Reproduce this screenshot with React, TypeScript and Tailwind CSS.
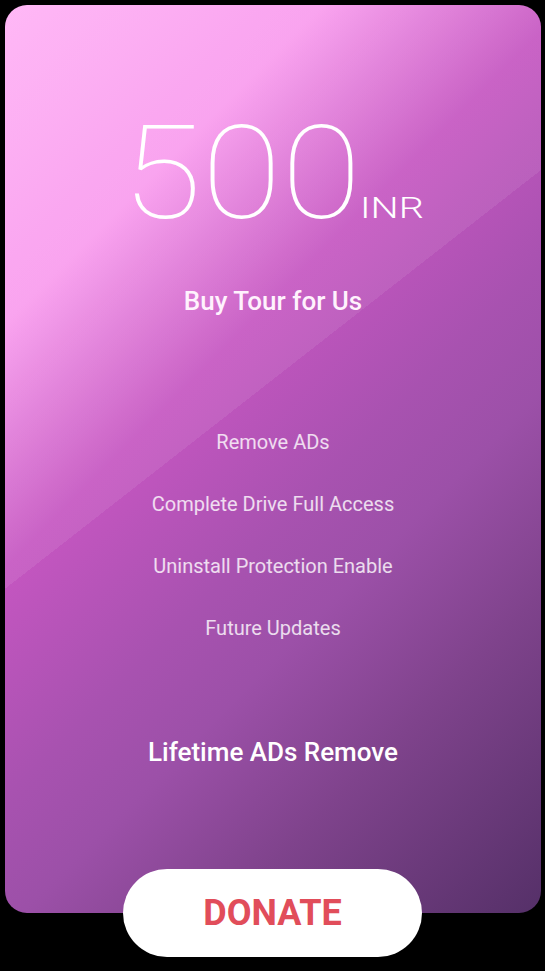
const features = [
  "Remove ADs",
  "Complete Drive Full Access",
  "Uninstall Protection Enable",
  "Future Updates",
];

const App = () => {
  return (
    <div className="w-full h-[971px] bg-black font-['Roboto',sans-serif] overflow-hidden">
      <div className="ml-[5px] pt-[5px]">
        <div className="w-[536px] h-[908px] rounded-[22px] flex flex-col items-center pt-[104px] bg-[linear-gradient(142deg,rgba(255,255,255,0.08)_44%,transparent_44%),linear-gradient(135deg,#ffb2f5_0%,#f99cee_22%,#c556c1_39%,#a852b0_55%,#9c50a8_64%,#7f438c_78%,#553068_100%)]">
          {/* price: wide thin digits, stretched a bit */}
          <div className="flex items-baseline text-white pr-[2px]">
            <span className="inline-block text-[130px] leading-none font-thin scale-x-[1.12] origin-left mr-[25px]">
              500
            </span>
            <span className="inline-block text-[30px] leading-none font-light scale-x-[1.32] origin-left mr-[14px]">
              INR
            </span>
          </div>

          <h2 className="mt-[48px] text-[26px] leading-[28px] font-medium text-[#fff2fd]">
            Buy Tour for Us
          </h2>

          <ul className="mt-[96px] flex flex-col items-center">
            {features.map((f) => (
              <li key={f} className="h-[62px] leading-[62px] text-[20px] text-white/80">
                {f}
              </li>
            ))}
          </ul>

          <p className="mt-[77px] text-[26px] leading-[32px] font-medium text-white">
            Lifetime ADs Remove
          </p>
        </div>
      </div>

      <button className="relative z-10 block mx-auto -mt-[44px] w-[299px] h-[88px] rounded-full bg-white text-[36px] font-bold text-[#e14d5a] leading-none">
        DONATE
      </button>
    </div>
  );
};

export default App;
